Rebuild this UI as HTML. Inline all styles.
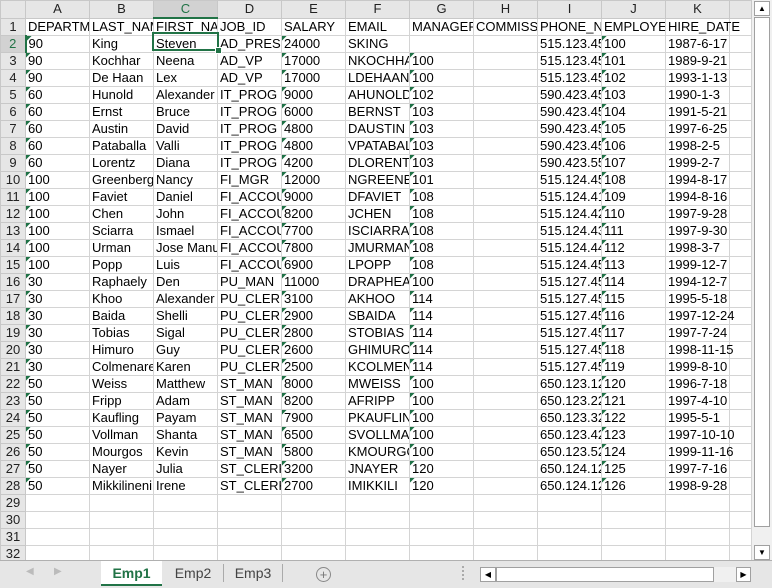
<!DOCTYPE html>
<html><head><meta charset="utf-8"><style>
body{margin:0;width:772px;height:588px;overflow:hidden;background:#e6e6e6;font-family:"Liberation Sans",Arial,sans-serif;position:relative}
table{position:absolute;left:0;top:0;border-collapse:collapse;table-layout:fixed;width:751px;background:#fff}
td{border:1px solid #d4d4d4;height:16px;padding:0 0 0 2px;font-size:13px;line-height:16px;white-space:nowrap;overflow:hidden;color:#000;box-sizing:border-box}
td:nth-child(12){overflow:visible;position:relative;z-index:2}
td:nth-child(13){border-left-color:transparent}
tr.h td:nth-child(13){border-left-color:#c8c8c8}
tr.h td{background:#e6e6e6;text-align:center;color:#222;height:16px;border-color:#c8c8c8;padding:0;font-size:13px}
td.r{background:#e6e6e6;text-align:center;color:#222;padding:0;border-color:#c8c8c8;font-size:13px}
td.t{background:linear-gradient(135deg,#1e7145 0,#1e7145 3px,transparent 3.5px) no-repeat}
tr.h td.s{background:#d2d2d2;color:#217346;border-bottom:2px solid #217346}
td.r.s{background:#d2d2d2;color:#217346;border-right:2px solid #217346}
.sel{position:absolute;left:152px;top:32px;width:63px;height:15px;border:2px solid #217346}
.sel:after{content:"";position:absolute;right:-5px;bottom:-5px;width:5px;height:5px;background:#217346;border:1px solid #fff}
.vs{position:absolute;left:752px;top:0;width:20px;height:560px;background:#f0f0f0}
.box{position:absolute;background:#fff;border:1px solid #a0a0a0;box-sizing:border-box}
.tabs{position:absolute;left:0;top:560px;width:772px;height:28px;background:#e6e6e6;border-top:1px solid #b0b0b0;box-sizing:border-box}
.tab{position:absolute;top:0;height:25px;font-size:14px;line-height:24px;text-align:center;color:#444}
</style></head><body>
<table>
<colgroup><col style="width:25px"><col style="width:64px"><col style="width:64px"><col style="width:64px"><col style="width:64px"><col style="width:64px"><col style="width:64px"><col style="width:64px"><col style="width:64px"><col style="width:64px"><col style="width:64px"><col style="width:64px"><col style="width:22px"></colgroup>
<tr class="h"><td></td><td>A</td><td>B</td><td class="s">C</td><td>D</td><td>E</td><td>F</td><td>G</td><td>H</td><td>I</td><td>J</td><td>K</td><td></td></tr>
<tr><td class="r">1</td><td>DEPARTMENT_ID</td><td>LAST_NAME</td><td>FIRST_NAME</td><td>JOB_ID</td><td>SALARY</td><td>EMAIL</td><td>MANAGER_ID</td><td>COMMISSION_PCT</td><td>PHONE_NUMBER</td><td>EMPLOYEE_ID</td><td>HIRE_DATE</td><td></td></tr>
<tr><td class="r s">2</td><td class="t">90</td><td>King</td><td>Steven</td><td>AD_PRES</td><td class="t">24000</td><td>SKING</td><td></td><td></td><td>515.123.4567</td><td class="t">100</td><td>1987-6-17</td><td></td></tr>
<tr><td class="r">3</td><td class="t">90</td><td>Kochhar</td><td>Neena</td><td>AD_VP</td><td class="t">17000</td><td>NKOCHHAR</td><td class="t">100</td><td></td><td>515.123.4568</td><td class="t">101</td><td>1989-9-21</td><td></td></tr>
<tr><td class="r">4</td><td class="t">90</td><td>De Haan</td><td>Lex</td><td>AD_VP</td><td class="t">17000</td><td>LDEHAAN</td><td class="t">100</td><td></td><td>515.123.4569</td><td class="t">102</td><td>1993-1-13</td><td></td></tr>
<tr><td class="r">5</td><td class="t">60</td><td>Hunold</td><td>Alexander</td><td>IT_PROG</td><td class="t">9000</td><td>AHUNOLD</td><td class="t">102</td><td></td><td>590.423.4567</td><td class="t">103</td><td>1990-1-3</td><td></td></tr>
<tr><td class="r">6</td><td class="t">60</td><td>Ernst</td><td>Bruce</td><td>IT_PROG</td><td class="t">6000</td><td>BERNST</td><td class="t">103</td><td></td><td>590.423.4568</td><td class="t">104</td><td>1991-5-21</td><td></td></tr>
<tr><td class="r">7</td><td class="t">60</td><td>Austin</td><td>David</td><td>IT_PROG</td><td class="t">4800</td><td>DAUSTIN</td><td class="t">103</td><td></td><td>590.423.4569</td><td class="t">105</td><td>1997-6-25</td><td></td></tr>
<tr><td class="r">8</td><td class="t">60</td><td>Pataballa</td><td>Valli</td><td>IT_PROG</td><td class="t">4800</td><td>VPATABAL</td><td class="t">103</td><td></td><td>590.423.4560</td><td class="t">106</td><td>1998-2-5</td><td></td></tr>
<tr><td class="r">9</td><td class="t">60</td><td>Lorentz</td><td>Diana</td><td>IT_PROG</td><td class="t">4200</td><td>DLORENTZ</td><td class="t">103</td><td></td><td>590.423.5567</td><td class="t">107</td><td>1999-2-7</td><td></td></tr>
<tr><td class="r">10</td><td class="t">100</td><td>Greenberg</td><td>Nancy</td><td>FI_MGR</td><td class="t">12000</td><td>NGREENBE</td><td class="t">101</td><td></td><td>515.124.4569</td><td class="t">108</td><td>1994-8-17</td><td></td></tr>
<tr><td class="r">11</td><td class="t">100</td><td>Faviet</td><td>Daniel</td><td>FI_ACCOUNT</td><td class="t">9000</td><td>DFAVIET</td><td class="t">108</td><td></td><td>515.124.4169</td><td class="t">109</td><td>1994-8-16</td><td></td></tr>
<tr><td class="r">12</td><td class="t">100</td><td>Chen</td><td>John</td><td>FI_ACCOUNT</td><td class="t">8200</td><td>JCHEN</td><td class="t">108</td><td></td><td>515.124.4269</td><td class="t">110</td><td>1997-9-28</td><td></td></tr>
<tr><td class="r">13</td><td class="t">100</td><td>Sciarra</td><td>Ismael</td><td>FI_ACCOUNT</td><td class="t">7700</td><td>ISCIARRA</td><td class="t">108</td><td></td><td>515.124.4369</td><td class="t">111</td><td>1997-9-30</td><td></td></tr>
<tr><td class="r">14</td><td class="t">100</td><td>Urman</td><td>Jose Manuel</td><td>FI_ACCOUNT</td><td class="t">7800</td><td>JMURMAN</td><td class="t">108</td><td></td><td>515.124.4469</td><td class="t">112</td><td>1998-3-7</td><td></td></tr>
<tr><td class="r">15</td><td class="t">100</td><td>Popp</td><td>Luis</td><td>FI_ACCOUNT</td><td class="t">6900</td><td>LPOPP</td><td class="t">108</td><td></td><td>515.124.4567</td><td class="t">113</td><td>1999-12-7</td><td></td></tr>
<tr><td class="r">16</td><td class="t">30</td><td>Raphaely</td><td>Den</td><td>PU_MAN</td><td class="t">11000</td><td>DRAPHEAL</td><td class="t">100</td><td></td><td>515.127.4561</td><td class="t">114</td><td>1994-12-7</td><td></td></tr>
<tr><td class="r">17</td><td class="t">30</td><td>Khoo</td><td>Alexander</td><td>PU_CLERK</td><td class="t">3100</td><td>AKHOO</td><td class="t">114</td><td></td><td>515.127.4562</td><td class="t">115</td><td>1995-5-18</td><td></td></tr>
<tr><td class="r">18</td><td class="t">30</td><td>Baida</td><td>Shelli</td><td>PU_CLERK</td><td class="t">2900</td><td>SBAIDA</td><td class="t">114</td><td></td><td>515.127.4563</td><td class="t">116</td><td>1997-12-24</td><td></td></tr>
<tr><td class="r">19</td><td class="t">30</td><td>Tobias</td><td>Sigal</td><td>PU_CLERK</td><td class="t">2800</td><td>STOBIAS</td><td class="t">114</td><td></td><td>515.127.4564</td><td class="t">117</td><td>1997-7-24</td><td></td></tr>
<tr><td class="r">20</td><td class="t">30</td><td>Himuro</td><td>Guy</td><td>PU_CLERK</td><td class="t">2600</td><td>GHIMURO</td><td class="t">114</td><td></td><td>515.127.4565</td><td class="t">118</td><td>1998-11-15</td><td></td></tr>
<tr><td class="r">21</td><td class="t">30</td><td>Colmenares</td><td>Karen</td><td>PU_CLERK</td><td class="t">2500</td><td>KCOLMENA</td><td class="t">114</td><td></td><td>515.127.4566</td><td class="t">119</td><td>1999-8-10</td><td></td></tr>
<tr><td class="r">22</td><td class="t">50</td><td>Weiss</td><td>Matthew</td><td>ST_MAN</td><td class="t">8000</td><td>MWEISS</td><td class="t">100</td><td></td><td>650.123.1234</td><td class="t">120</td><td>1996-7-18</td><td></td></tr>
<tr><td class="r">23</td><td class="t">50</td><td>Fripp</td><td>Adam</td><td>ST_MAN</td><td class="t">8200</td><td>AFRIPP</td><td class="t">100</td><td></td><td>650.123.2234</td><td class="t">121</td><td>1997-4-10</td><td></td></tr>
<tr><td class="r">24</td><td class="t">50</td><td>Kaufling</td><td>Payam</td><td>ST_MAN</td><td class="t">7900</td><td>PKAUFLIN</td><td class="t">100</td><td></td><td>650.123.3234</td><td class="t">122</td><td>1995-5-1</td><td></td></tr>
<tr><td class="r">25</td><td class="t">50</td><td>Vollman</td><td>Shanta</td><td>ST_MAN</td><td class="t">6500</td><td>SVOLLMAN</td><td class="t">100</td><td></td><td>650.123.4234</td><td class="t">123</td><td>1997-10-10</td><td></td></tr>
<tr><td class="r">26</td><td class="t">50</td><td>Mourgos</td><td>Kevin</td><td>ST_MAN</td><td class="t">5800</td><td>KMOURGOS</td><td class="t">100</td><td></td><td>650.123.5234</td><td class="t">124</td><td>1999-11-16</td><td></td></tr>
<tr><td class="r">27</td><td class="t">50</td><td>Nayer</td><td>Julia</td><td>ST_CLERK</td><td class="t">3200</td><td>JNAYER</td><td class="t">120</td><td></td><td>650.124.1214</td><td class="t">125</td><td>1997-7-16</td><td></td></tr>
<tr><td class="r">28</td><td class="t">50</td><td>Mikkilineni</td><td>Irene</td><td>ST_CLERK</td><td class="t">2700</td><td>IMIKKILI</td><td class="t">120</td><td></td><td>650.124.1224</td><td class="t">126</td><td>1998-9-28</td><td></td></tr>
<tr><td class="r">29</td><td></td><td></td><td></td><td></td><td></td><td></td><td></td><td></td><td></td><td></td><td></td><td></td></tr>
<tr><td class="r">30</td><td></td><td></td><td></td><td></td><td></td><td></td><td></td><td></td><td></td><td></td><td></td><td></td></tr>
<tr><td class="r">31</td><td></td><td></td><td></td><td></td><td></td><td></td><td></td><td></td><td></td><td></td><td></td><td></td></tr>
<tr><td class="r">32</td><td></td><td></td><td></td><td></td><td></td><td></td><td></td><td></td><td></td><td></td><td></td><td></td></tr>
</table>
<div class="sel"></div>
<div class="vs">
 <div class="box" style="left:2px;top:1px;width:16px;height:15px;font-size:8px;text-align:center;line-height:14px">▲</div>
 <div class="box" style="left:2px;top:17px;width:16px;height:510px"></div>
 <div class="box" style="left:2px;top:545px;width:16px;height:15px;font-size:8px;text-align:center;line-height:14px">▼</div>
</div>
<div class="tabs">
 <div style="position:absolute;left:26px;top:5px;color:#bbb;font-size:10px">◀</div>
 <div style="position:absolute;left:54px;top:5px;color:#bbb;font-size:10px">▶</div>
 <div class="tab" style="left:101px;width:61px;background:#fff;color:#217346;font-weight:bold;border-bottom:2px solid #217346;height:23px">Emp1</div>
 <div class="tab" style="left:163px;width:60px;border-right:1px solid #aaa;height:18px;top:3px;line-height:18px">Emp2</div>
 <div class="tab" style="left:224px;width:58px;border-right:1px solid #aaa;height:18px;top:3px;line-height:18px">Emp3</div>
 <div style="position:absolute;left:316px;top:6px;width:13px;height:13px;border:1px solid #888;border-radius:50%;text-align:center;line-height:13px;font-size:13px;color:#777">+</div>
 <div style="position:absolute;left:462px;top:5px;width:2px;height:14px;border-left:2px dotted #aaa"></div>
 <div style="position:absolute;left:480px;top:6px;width:271px;height:15px;background:#f0f0f0"></div>
 <div class="box" style="left:480px;top:6px;width:16px;height:15px;font-size:8px;text-align:center;line-height:13px">◀</div>
 <div class="box" style="left:496px;top:6px;width:218px;height:15px"></div>
 <div class="box" style="left:736px;top:6px;width:15px;height:15px;font-size:8px;text-align:center;line-height:13px">▶</div>
</div>
</body></html>
